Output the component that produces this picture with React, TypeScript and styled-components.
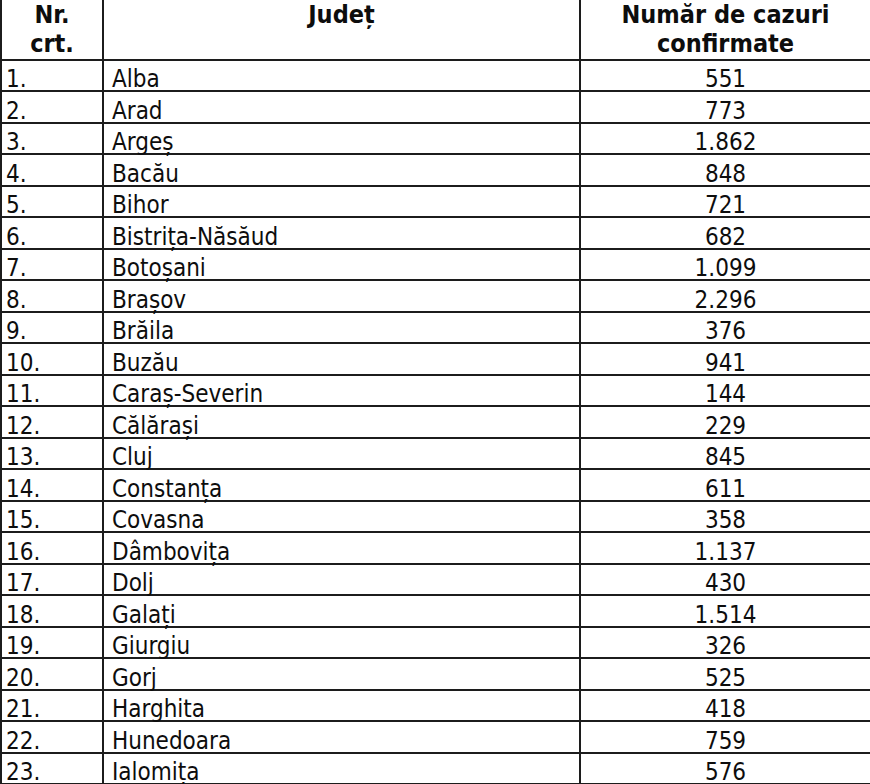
import styled, { createGlobalStyle } from "styled-components";

const GlobalStyle = createGlobalStyle`
  html, body {
    margin: 0;
    padding: 0;
    background: #fff;
    overflow: hidden;
  }
`;

const rows: [string, string][] = [
  ["Alba", "551"],
  ["Arad", "773"],
  ["Argeș", "1.862"],
  ["Bacău", "848"],
  ["Bihor", "721"],
  ["Bistrița-Năsăud", "682"],
  ["Botoșani", "1.099"],
  ["Brașov", "2.296"],
  ["Brăila", "376"],
  ["Buzău", "941"],
  ["Caraș-Severin", "144"],
  ["Călărași", "229"],
  ["Cluj", "845"],
  ["Constanța", "611"],
  ["Covasna", "358"],
  ["Dâmbovița", "1.137"],
  ["Dolj", "430"],
  ["Galați", "1.514"],
  ["Giurgiu", "326"],
  ["Gorj", "525"],
  ["Harghita", "418"],
  ["Hunedoara", "759"],
  ["Ialomița", "576"],
];

export default function App() {
  return (
    <>
      <GlobalStyle />
      <Table>
        <colgroup>
          <col style={{ width: 104 }} />
          <col style={{ width: 477 }} />
          <col style={{ width: 291 }} />
        </colgroup>
        <thead>
          <tr>
            <Th>
              Nr.
              <br />
              crt.
            </Th>
            <Th>Județ</Th>
            <Th>
              Număr de cazuri
              <br />
              confirmate
            </Th>
          </tr>
        </thead>
        <tbody>
          {rows.map(([county, cases], i) => (
            <Row key={county} $tall={i % 2 === 1}>
              <Cell $align="left" $pad={4}>
                {i + 1}.
              </Cell>
              <Cell $align="left" $pad={8}>
                {county}
              </Cell>
              <Cell $align="center" $pad={0}>
                {cases}
              </Cell>
            </Row>
          ))}
        </tbody>
      </Table>
    </>
  );
}

const Table = styled.table`
  width: 872px;
  table-layout: fixed;
  border-collapse: separate;
  border-spacing: 0;
  font-family: "DejaVu Sans Condensed", "DejaVu Sans", sans-serif;
  font-stretch: condensed;
  color: #0d0d0d;
`;

const Th = styled.th`
  font-size: 25px;
  font-weight: 700;
  line-height: 29px;
  text-align: center;
  vertical-align: top;
  padding: 0 0 1px;
  height: 61px;
  box-sizing: border-box;
  border-right: 2px solid #1c1c1c;
  border-bottom: 2px solid #1c1c1c;
  &:first-child {
    border-left: 2px solid #1c1c1c;
  }
`;

const Row = styled.tr<{ $tall: boolean }>`
  height: ${(p) => (p.$tall ? 32 : 31)}px;
`;

const Cell = styled.td<{ $align: "left" | "center"; $pad: number }>`
  font-size: 24px;
  line-height: 22px;
  text-align: ${(p) => p.$align};
  vertical-align: bottom;
  padding: 0 0 0 ${(p) => p.$pad}px;
  white-space: nowrap;
  border-right: 2px solid #1c1c1c;
  border-bottom: 2px solid #1c1c1c;
  &:first-child {
    border-left: 2px solid #1c1c1c;
  }
`;
